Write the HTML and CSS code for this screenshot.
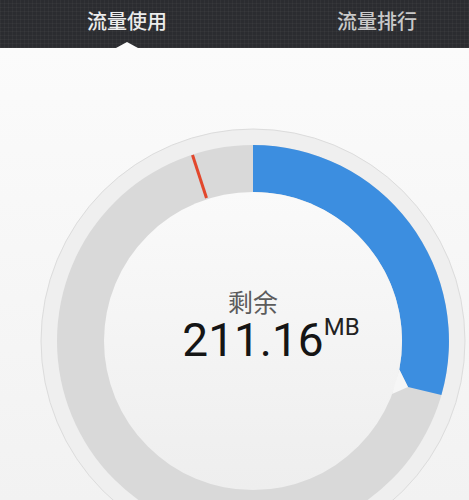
FILE: index.html
```html
<!DOCTYPE html>
<html lang="zh">
<head>
<meta charset="utf-8">
<title>流量使用</title>
<link rel="stylesheet" href="styles.css">
</head>
<body>
<div class="tabs">
  <div class="tab active">流量使用<span class="caret"></span></div>
  <div class="tab">流量排行</div>
</div>
<div class="gauge">
  <svg class="dial" width="469" height="452" viewBox="0 48 469 452" xmlns="http://www.w3.org/2000/svg">
    <defs>
      <linearGradient id="inner" x1="0" y1="0" x2="0" y2="1">
        <stop offset="0" stop-color="#fafafa"/>
        <stop offset="1" stop-color="#eeeeee"/>
      </linearGradient>
      <linearGradient id="bg" x1="0" y1="0" x2="0" y2="1">
        <stop offset="0" stop-color="#fbfbfb"/>
        <stop offset="1" stop-color="#f2f2f2"/>
      </linearGradient>
    </defs>
    <rect x="0" y="48" width="469" height="452" fill="url(#bg)"/>
    <circle cx="253" cy="341" r="212" fill="#efefef" stroke="#dcdcdc" stroke-width="1"/>
    <circle cx="253" cy="341" r="196" fill="#d9d9d9"/>
    <path d="M253 145 A196 196 0 0 1 441.4 395 L408 387 L399.3 369.4 A149 149 0 0 0 253 192 Z" fill="#3c8ee0"/>
    <circle cx="253" cy="341" r="149" fill="url(#inner)"/>
    <polygon points="399.3,369.4 408,387 392,394" fill="#f6f6f6"/>
    <line x1="192.5" y1="155" x2="206.5" y2="198" stroke="#e2472c" stroke-width="3"/>
  </svg>
  <div class="label">剩余</div>
  <div class="value"><span class="num">211.16<span class="unit">MB</span></span></div>
</div>
</body>
</html>
```
FILE: styles.css
```css
html, body {
  margin: 0;
  padding: 0;
  background: #f8f8f8;
}
body {
  width: 469px;
  height: 500px;
  overflow: hidden;
  font-family: "Noto Sans CJK SC", "Noto Sans", sans-serif;
}
.tabs {
  display: flex;
  height: 48px;
  padding-left: 2px;
  box-sizing: border-box;
  overflow: hidden;
  background-color: #2b2c30;
  background-image:
    repeating-linear-gradient(0deg, rgba(255,255,255,0.03) 0 1px, transparent 1px 4px),
    repeating-linear-gradient(90deg, rgba(255,255,255,0.03) 0 1px, transparent 1px 4px);
}
.tab {
  position: relative;
  flex: 0 0 250px;
  text-align: center;
  font-size: 20px;
  line-height: 42px;
  font-weight: 500;
  color: #c9c9c9;
}
.tab.active {
  color: #ececec;
}
.caret {
  position: absolute;
  left: 50%;
  bottom: 0;
  margin-left: -11px;
  width: 0;
  height: 0;
  border-left: 11px solid transparent;
  border-right: 11px solid transparent;
  border-bottom: 6px solid #fbfbfb;
}
.gauge {
  position: relative;
  height: 452px;
}
.dial {
  display: block;
}
.label,
.value {
  position: absolute;
  left: 0;
  width: 469px;
  padding-left: 37px;
  box-sizing: border-box;
  text-align: center;
}
.label {
  top: 241px;
  font-size: 25px;
  line-height: 25px;
  color: #5c5c5c;
}
.value {
  top: 269px;
  font-family: Roboto, "Liberation Sans", sans-serif;
}
.num {
  position: relative;
  font-size: 46px;
  line-height: 46px;
  color: #151515;
}
.unit {
  position: absolute;
  left: 100%;
  top: 1.5px;
  font-size: 24px;
  line-height: 24px;
  color: #222;
}
```
